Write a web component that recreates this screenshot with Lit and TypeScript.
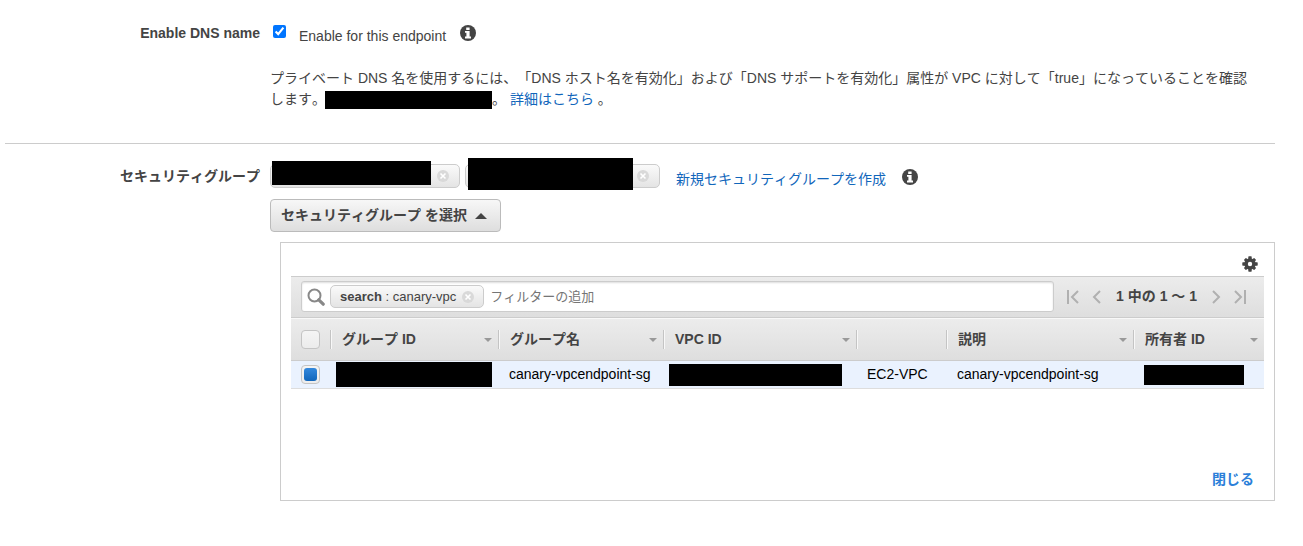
import { LitElement, html, css, svg } from "lit";
import { customElement, state } from "lit/decorators.js";

const infoIcon = svg`<svg class="info" viewBox="0 0 16 16" aria-hidden="true">
  <circle cx="8" cy="8" r="8" fill="#444"/>
  <path fill="#fff" d="M6.2 2.4h3.4v2.5H6.2zM5 6h4.6v5.6H11v1.8H5v-1.8h1.4V7.8H5z"/>
</svg>`;

const removeIcon = svg`<svg class="remove-icon" viewBox="0 0 12 12" aria-hidden="true">
  <circle cx="6" cy="6" r="6" fill="#d9d9d9"/>
  <path d="M3.5 3.5l5 5M8.5 3.5l-5 5" stroke="#fff" stroke-width="1.6"/>
</svg>`;

const searchIcon = svg`<svg class="search-icon" viewBox="0 0 18 18" aria-hidden="true">
  <circle cx="7.5" cy="7.5" r="6" fill="none" stroke="#888" stroke-width="2"/>
  <path d="M11.8 11.8l4.4 4.4" stroke="#888" stroke-width="3.2" stroke-linecap="round"/>
</svg>`;

const gearIcon = svg`<svg class="gear" viewBox="0 0 16 16" aria-hidden="true">
  <g fill="#444">
    <circle cx="8" cy="8" r="5.7"/>
    <rect x="6.3" y="0.3" width="3.4" height="15.4" rx="0.6"/>
    <rect x="0.3" y="6.3" width="15.4" height="3.4" rx="0.6"/>
    <rect x="6.5" y="0.8" width="3" height="14.4" rx="0.6" transform="rotate(45 8 8)"/>
    <rect x="6.5" y="0.8" width="3" height="14.4" rx="0.6" transform="rotate(-45 8 8)"/>
  </g>
  <circle cx="8" cy="8" r="2.2" fill="#fff"/>
</svg>`;

const pagerIcon = (d: string) => svg`<svg class="pager-icon" viewBox="0 0 12 14" aria-hidden="true">
  <path d=${d} fill="none" stroke="#b0b0b0" stroke-width="2"/>
</svg>`;

interface Column {
  label: string;
  size: string;
  sortable: boolean;
}

@customElement("app-root")
export class AppRoot extends LitElement {
  @state() private open = true;

  private columns: Column[] = [
    { label: "グループ ID", size: "c-group", sortable: true },
    { label: "グループ名", size: "c-name", sortable: true },
    { label: "VPC ID", size: "c-vpc", sortable: true },
    { label: "", size: "c-type", sortable: false },
    { label: "説明", size: "c-desc", sortable: true },
    { label: "所有者 ID", size: "c-owner", sortable: true },
  ];

  static styles = css`
    :host {
      display: block;
      padding: 22px 28px 44px 5px;
      color: #444;
      background: #fff;
      font: 14px/21px "Liberation Sans", "Noto Sans CJK JP", sans-serif;
      font-kerning: none;
      text-spacing-trim: space-all;
    }
    * { box-sizing: border-box; }
    button, input { font: inherit; font-kerning: none; color: inherit; margin: 0; }
    button { border: 0; padding: 0; background: none; cursor: pointer; }
    svg { display: block; flex: none; }
    a { color: #1166bb; text-decoration: none; }
    .row {
      display: grid;
      grid-template-columns: 255px minmax(0, 1fr);
      column-gap: 10px;
    }
    .label { text-align: right; font-weight: bold; }
    .dns-label { padding-top: 1px; }
    .option { display: flex; align-items: flex-start; padding: 3px 0 0 3px; }
    .option label { padding: 1px 14px 0 13px; }
    .native { width: 13px; height: 13px; }
    .info { width: 16px; height: 16px; }
    .help { margin: 21px 20px 0 0; }
    .redact { background: #000; display: block; }
    .help .redact { display: inline-block; width: 167px; height: 18px; vertical-align: -5px; margin-left: -1px; }
    .rule { border: 0; border-top: 1px solid #ccc; margin: 33px 0 20px; }
    .groups { padding-top: 2px; }
    .tokens { display: flex; align-items: flex-start; }
    .token {
      display: flex;
      align-items: center;
      justify-content: flex-end;
      position: relative;
      height: 24px;
      padding: 0 10px;
      border: 1px solid #ccc;
      border-radius: 5px;
      background: linear-gradient(#fafafa, #e4e4e4);
    }
    .token-a { width: 190px; margin-right: 5px; }
    .token-b { width: 195px; }
    .token .redact { position: absolute; }
    .token-a .redact { left: 1px; right: 28px; top: -4px; height: 24px; }
    .token-b .redact { left: 2px; right: 26px; top: -7px; height: 32px; }
    .remove-icon { width: 12px; height: 12px; }
    .create { margin: 5px 16px 0; }
    .tokens .info { margin-top: 5px; }
    .picker {
      display: flex;
      align-items: center;
      gap: 8px;
      height: 33px;
      margin-top: 9px;
      padding: 0 13px 0 10px;
      border: 1px solid #bbb;
      border-radius: 4px;
      background: linear-gradient(#f7f7f7, #dedede);
      font-weight: bold;
    }
    .up { width: 12px; height: 6px; }
    .panel {
      margin: 10px 0 0 10px;
      padding: 0 10px 10px;
      border: 1px solid #ccc;
    }
    .panel-top { display: flex; justify-content: flex-end; padding: 13px 6px 4px; }
    .gear { width: 16px; height: 16px; }
    .toolbar {
      display: flex;
      align-items: flex-start;
      padding: 4px 18px 0 10px;
      height: 42px;
      border: 1px solid #ccc;
      border-width: 1px 0;
      background: linear-gradient(#ececec, #dedede);
    }
    .search {
      display: flex;
      align-items: center;
      flex: 1;
      height: 31px;
      padding: 0 5px;
      border: 1px solid #ccc;
      border-radius: 3px;
      background: #fff;
      box-shadow: inset 0 1px 2px #ddd;
      font-size: 13px;
    }
    .search-icon { width: 18px; height: 18px; }
    .filter {
      display: flex;
      align-items: center;
      gap: 6px;
      height: 23px;
      margin: 0 6px 0 5px;
      padding: 0 9px;
      border: 1px solid #ccc;
      border-radius: 5px;
      background: linear-gradient(#fafafa, #e4e4e4);
      white-space: nowrap;
    }
    .query { flex: 1; min-width: 0; border: 0; padding: 0; background: none; outline: none; }
    .query::placeholder { color: #757575; opacity: 1; }
    .pager { display: flex; align-items: center; gap: 12px; height: 31px; padding-left: 13px; font-weight: bold; }
    .pager-icon { width: 12px; height: 14px; }
    .count { padding: 0 1px; white-space: nowrap; }
    table { width: 100%; table-layout: fixed; border-collapse: separate; border-spacing: 0; }
    th {
      height: 43px;
      padding: 0;
      border-top: 1px solid #f8f8f8;
      border-bottom: 1px solid #ccc;
      text-align: left;
      background: linear-gradient(#ececec, #dedede);
    }
    .c-check { width: 39px; }
    .c-group { width: 168px; }
    .c-name { width: 165px; }
    .c-vpc { width: 193px; }
    .c-type { width: 90px; }
    .c-owner { width: 131px; }
    .sort {
      display: flex;
      align-items: center;
      justify-content: space-between;
      width: 100%;
      height: 19px;
      padding: 0 6px 0 11px;
      border-left: 1px solid #c4c4c4;
      box-shadow: inset 1px 0 #f8f8f8;
      font-weight: bold;
    }
    .down { width: 8px; height: 4px; }
    td {
      height: 28px;
      padding: 0 0 0 11px;
      border-bottom: 1px solid #ddd;
      background: #eaf2fe;
      color: #000;
      white-space: nowrap;
    }
    .pick { padding: 0 0 0 10px; }
    .box {
      appearance: none;
      display: grid;
      place-content: center;
      width: 19px;
      height: 19px;
      border: 1px solid #c4c4c4;
      border-radius: 4px;
      background: linear-gradient(#f4f4f4, #ececec);
    }
    .box:checked::before {
      content: "";
      width: 13px;
      height: 13px;
      border-radius: 3px;
      background: linear-gradient(#3388dd, #1166bb);
    }
    .flush { padding-left: 6px; }
    .id-group { width: 156px; height: 25px; }
    .id-vpc { width: 173px; height: 22px; }
    .id-owner { width: 100px; height: 20px; }
    .close { display: flex; justify-content: flex-end; padding: 80px 10px 0; }
    .close button { color: #2b7fd9; font-weight: bold; }
  `;

  render() {
    return html`
      <section class="row">
        <div class="label dns-label">Enable DNS name</div>
        <div>
          <div class="option">
            <input class="native" id="dns" type="checkbox" checked />
            <label for="dns">Enable for this endpoint</label>
            ${infoIcon}
          </div>
          <p class="help">プライベート DNS 名を使用するには、「DNS ホスト名を有効化」および「DNS サポートを有効化」属性が VPC に対して「true」になっていることを確認します。<span class="redact"></span>。 <a href="#">詳細はこちら</a> 。</p>
        </div>
      </section>
      <hr class="rule" />
      <section class="row">
        <div class="label groups">セキュリティグループ</div>
        <div>
          <div class="tokens">
            <span class="token token-a"><button aria-label="削除">${removeIcon}</button><span class="redact"></span></span>
            <span class="token token-b"><button aria-label="削除">${removeIcon}</button><span class="redact"></span></span>
            <a class="create" href="#">新規セキュリティグループを作成</a>
            ${infoIcon}
          </div>
          <button class="picker" aria-expanded=${this.open} @click=${() => (this.open = !this.open)}>
            セキュリティグループ を選択
            <svg class="up" viewBox="0 0 12 6"><path d="M0 6l6-6 6 6z" fill="#444" /></svg>
          </button>
          ${this.open ? this.renderPanel() : null}
        </div>
      </section>
    `;
  }

  private renderPanel() {
    return html`
      <div class="panel">
        <div class="panel-top"><button aria-label="設定">${gearIcon}</button></div>
        <div class="toolbar">
          <div class="search">
            ${searchIcon}
            <span class="filter"><span><b>search</b> : canary-vpc</span><button aria-label="削除">${removeIcon}</button></span>
            <input class="query" type="text" aria-label="フィルターの追加" placeholder="フィルターの追加" />
          </div>
          <div class="pager">
            <button aria-label="最初">${pagerIcon("M1 0v14M11 1L5 7l6 6")}</button>
            <button aria-label="前へ">${pagerIcon("M9 1L3 7l6 6")}</button>
            <span class="count">1 中の 1 ～ 1</span>
            <button aria-label="次へ">${pagerIcon("M3 1l6 6-6 6")}</button>
            <button aria-label="最後">${pagerIcon("M11 0v14M1 1l6 6-6 6")}</button>
          </div>
        </div>
        <table>
          <thead>
            <tr>
              <th class="c-check pick"><input class="box" type="checkbox" aria-label="すべて選択" /></th>
              ${this.columns.map(
                (c) => html`<th class=${c.size}>
                  ${c.sortable
                    ? html`<button class="sort">${c.label}<svg class="down" viewBox="0 0 8 4"><path d="M0 0h8L4 4z" fill="#999" /></svg></button>`
                    : html`<div class="sort"></div>`}
                </th>`
              )}
            </tr>
          </thead>
          <tbody>
            <tr>
              <td class="pick"><input class="box" type="checkbox" aria-label="選択" checked /></td>
              <td class="flush"><span class="redact id-group"></span></td>
              <td>canary-vpcendpoint-sg</td>
              <td class="flush"><span class="redact id-vpc"></span></td>
              <td>EC2-VPC</td>
              <td>canary-vpcendpoint-sg</td>
              <td><span class="redact id-owner"></span></td>
            </tr>
          </tbody>
        </table>
        <div class="close"><button @click=${() => (this.open = false)}>閉じる</button></div>
      </div>
    `;
  }
}
